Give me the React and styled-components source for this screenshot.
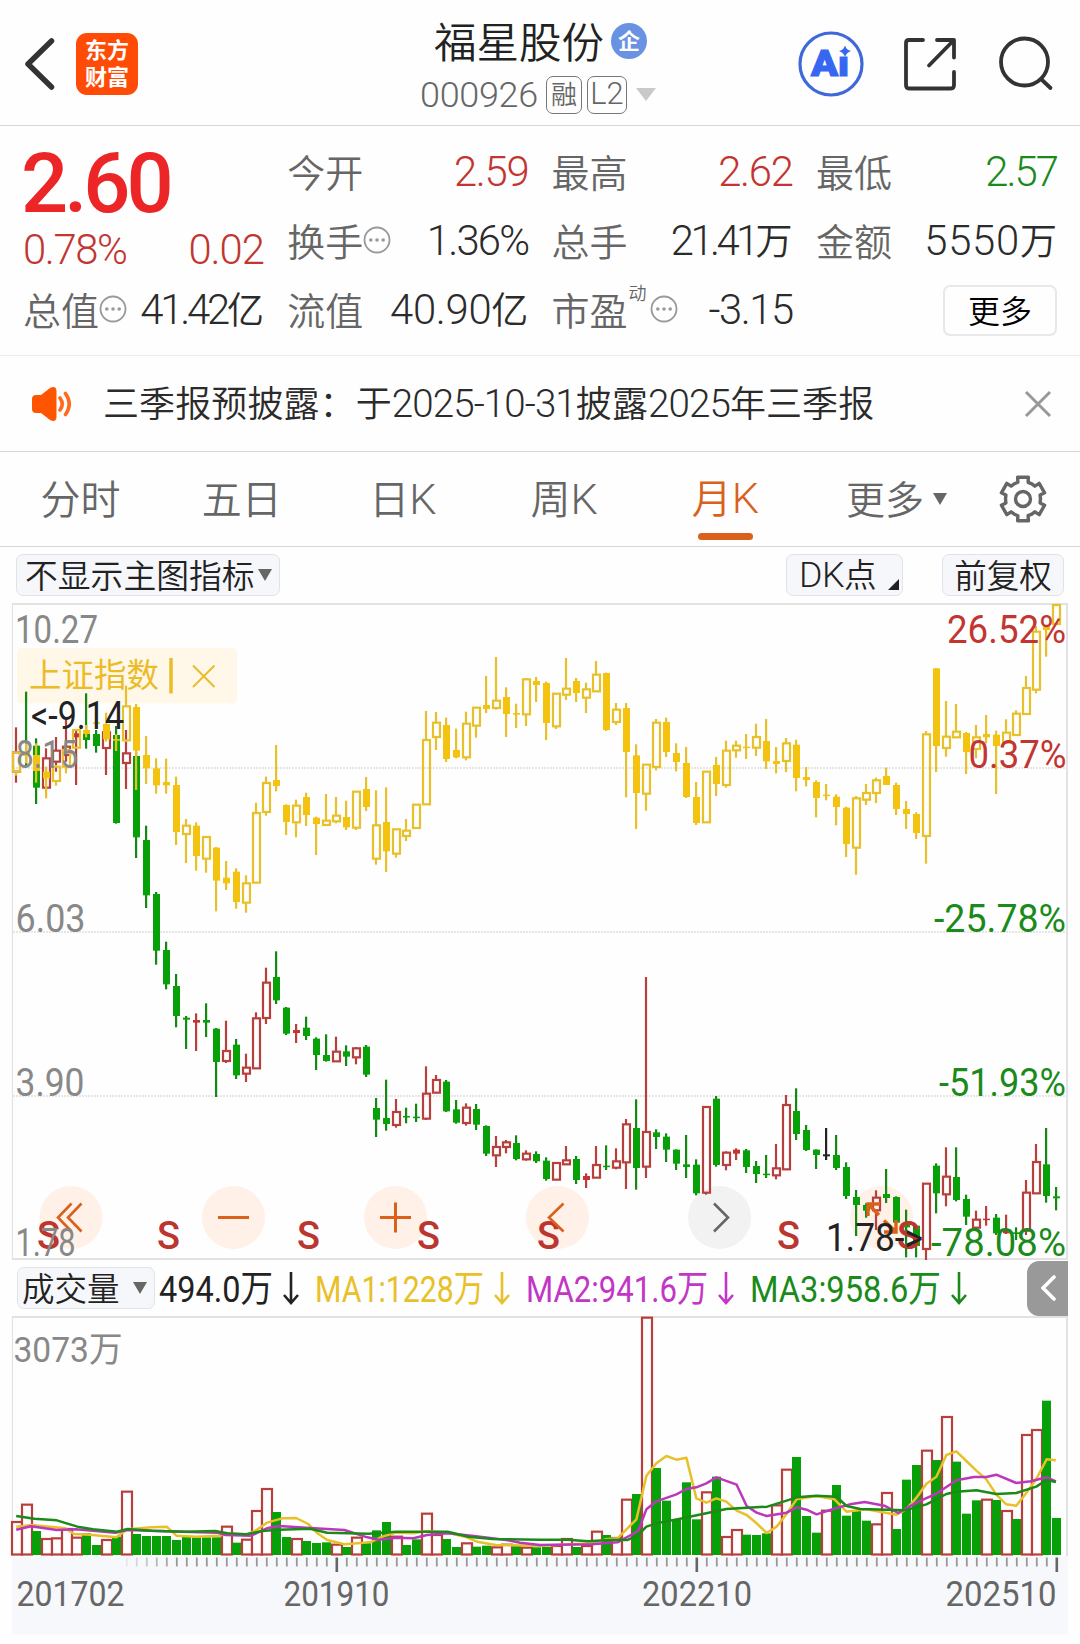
import React from 'react';
import styled, { createGlobalStyle } from 'styled-components';

const RED = '#c23531';
const GREEN = '#08a008';
const DEEP_GREEN = '#1a8a1a';
const GOLD = '#f3c310';
const GOLD_LINE = '#e8c02a';
const ORANGE = '#d9611c';

const Global = createGlobalStyle`
  * { box-sizing: border-box; }
  body {
    margin: 0;
    background: #fefefe;
    font-family: Roboto, 'Noto Sans CJK SC', sans-serif;
    color: #2b2b2b;
  }
  svg { display: block; }
`;

const Page = styled.main`
  width: 1080px;
  height: 1644px;
  display: flex;
  flex-direction: column;
  overflow: hidden;
  & > * { flex-shrink: 0; }
`;

/* ---------- mixed Chinese / Latin text ---------- */

const Run = styled.span`
  font-size: ${(p) => p.$size}px;
  font-weight: ${(p) => p.$weight || 'inherit'};
  color: ${(p) => p.$color || 'inherit'};
  line-height: 1.2;
  white-space: nowrap;
`;

const Latin = styled.span`
  font-family: Roboto, sans-serif;
  font-size: ${(p) => p.$scale}em;
  letter-spacing: ${(p) => p.$track}px;
  font-weight: ${(p) => p.$weight};
`;

const Han = styled.span`
  font-family: 'Noto Sans CJK SC', sans-serif;
  font-weight: ${(p) => p.$weight};
  letter-spacing: ${(p) => p.$track}px;
`;

function Mixed({ text, size, scale = 1.1, track = 0, hanTrack = 0, color, weight = 350, hanWeight = 350 }) {
  const runs = text.match(/[ -~]+|[^ -~]+/g) || [];
  return (
    <Run $size={size} $color={color}>
      {runs.map((r, i) =>
        /[ -~]/.test(r[0]) ? (
          <Latin key={i} $scale={scale} $track={track} $weight={weight}>{r}</Latin>
        ) : (
          <Han key={i} $weight={hanWeight} $track={hanTrack}>{r}</Han>
        )
      )}
    </Run>
  );
}

/* ---------- header ---------- */

const Header = styled.header`
  height: 126px;
  display: grid;
  grid-template-columns: 420px 1fr 282px;
  border-bottom: 1px solid #d6d6d6;
`;

const HeaderSide = styled.div`
  display: flex;
  align-items: center;
  padding: 3px 0 0 24px;
  gap: 21px;
`;

const Logo = styled.div`
  width: 62px;
  height: 62px;
  border-radius: 11px;
  background: #ff4b05;
  color: #fff;
  display: flex;
  flex-direction: column;
  align-items: center;
  justify-content: center;
  padding-bottom: 5px;
  font: 700 22px/27px 'Noto Sans CJK SC', sans-serif;
`;

const Heading = styled.div`
  display: flex;
  flex-direction: column;
  padding-top: 15px;
`;

const TitleLine = styled.div`
  display: flex;
  align-items: center;
  height: 52px;
  padding-left: 14px;
  gap: 7px;
`;

const CodeLine = styled.div`
  display: flex;
  align-items: center;
  height: 55px;
  gap: 5px;
`;

const CodeText = styled.div`
  width: 121px;
  padding-top: 3px;
`;

const Tag = styled.div`
  width: ${(p) => p.$w}px;
  height: 38px;
  border: 1.5px solid #777;
  border-radius: 7px;
  display: flex;
  align-items: center;
  justify-content: center;
`;

const Actions = styled.div`
  display: flex;
  align-items: center;
  padding-top: 3px;
`;

const DownMark = styled.i`
  flex: none;
  width: 0;
  height: 0;
  border-left: ${(p) => p.$w / 2}px solid transparent;
  border-right: ${(p) => p.$w / 2}px solid transparent;
  border-top: ${(p) => p.$h}px solid ${(p) => p.$color};
  margin-left: ${(p) => p.$ml || 0}px;
`;

function TopBar() {
  return (
    <Header>
      <HeaderSide>
        <svg width="31" height="54" viewBox="0 0 31 54">
          <path d="M27.500 4 L4 27 L27.500 50" fill="none" stroke="#333" strokeWidth="5.500" strokeLinecap="round" strokeLinejoin="round" />
        </svg>
        <Logo>
          <span>东方</span>
          <span>财富</span>
        </Logo>
      </HeaderSide>
      <Heading>
        <TitleLine>
          <Mixed text="福星股份" size={42.5} color="#222" />
          <svg width="36" height="36" viewBox="0 0 36 36">
            <circle cx="18" cy="18" r="18" fill="#6a92e3" />
            <text x="18" y="26" textAnchor="middle" fontSize="22" fontWeight="700" fill="#fff" fontFamily="'Noto Sans CJK SC', sans-serif">企</text>
          </svg>
        </TitleLine>
        <CodeLine>
          <CodeText>
            <Mixed text="000926" size={32.7} track={-0.3} color="#666" />
          </CodeText>
          <Tag $w={36}><Mixed text="融" size={26} color="#666" /></Tag>
          <Tag $w={40}><Mixed text="L2" size={28} color="#666" /></Tag>
          <DownMark $w={20} $h={13} $color="#c9c9c9" $ml={4} />
        </CodeLine>
      </Heading>
      <Actions>
        <svg width="282" height="70" viewBox="798 29 282 70">
          <circle cx="831" cy="64" r="31" fill="none" stroke="#3f68da" strokeWidth="3.200" />
          <text x="811" y="75.500" fontSize="37" fontWeight="900" fill="#3767f2" stroke="#3767f2" strokeWidth="1.200" textLength="38" lengthAdjust="spacingAndGlyphs" fontFamily="Roboto, sans-serif">Ai</text>
          <rect x="838" y="44" width="13" height="12.500" fill="#fefefe" />
          <path d="M845 45.500 Q846.500 50 851 51 Q846.500 52.500 845 57 Q843.500 52.500 839 51 Q843.500 50 845 45.500Z" fill="#3767f2" />
          <g fill="none" stroke="#333" strokeWidth="3.800" strokeLinecap="round" strokeLinejoin="round">
            <path d="M923 40 H909 Q906 40 906 43 V85 Q906 88.500 909 88.500 H951 Q954 88.500 954 85 V72" />
            <path d="M937 40 H954 V57.500 M953 41 L929 65.500" />
            <circle cx="1024.500" cy="62" r="23.500" />
            <path d="M1041 79 L1050.500 88" />
          </g>
        </svg>
      </Actions>
    </Header>
  );
}

/* ---------- quote panel ---------- */

const Quote = styled.section`
  height: 230px;
  padding: 12px 0 0 23px;
  display: grid;
  grid-template-columns: repeat(4, 241px);
  grid-template-rows: repeat(3, 69px);
  column-gap: 23.3px;
  border-bottom: 1px solid #ececec;
`;

const Cell = styled.div`
  display: flex;
  align-items: center;
  justify-content: space-between;
`;

const LabelBox = styled.div`
  display: flex;
  align-items: center;
`;

const Sup = styled.span`
  font: 350 18px/18px 'Noto Sans CJK SC', sans-serif;
  color: #666;
  align-self: flex-start;
  width: 20px;
  margin: -3px 1px 0 1px;
`;

const PriceBlock = styled.div`
  grid-row: span 2;
  display: flex;
  flex-direction: column;
`;

const Price = styled.div`
  font: 500 83px/83px Roboto, sans-serif;
  letter-spacing: -4px;
  color: #ec2626;
  margin: 4px 0 0 -2px;
`;

const Change = styled.div`
  display: flex;
  justify-content: space-between;
  height: 60px;
  align-items: center;
`;

const MoreButton = styled.button`
  margin-left: auto;
  width: 114px;
  height: 51px;
  padding: 0;
  border: 2px solid #e8e8e8;
  border-radius: 7px;
  background: #fefefe;
`;

function Info() {
  return (
    <svg width="28" height="32" viewBox="0 0 28 32">
      <circle cx="14" cy="14" r="12.500" fill="none" stroke="#999" strokeWidth="1.800" />
      <g fill="#999"><circle cx="7.800" cy="14" r="1.800" /><circle cx="14" cy="14" r="1.800" /><circle cx="20.200" cy="14" r="1.800" /></g>
    </svg>
  );
}

function Field({ label, value, color = '#2b2b2b', info, sup, track = -1.3 }) {
  return (
    <Cell>
      <LabelBox>
        <Mixed text={label} size={38} color="#666" />
        {sup && <Sup>{sup}</Sup>}
        {info && <Info />}
      </LabelBox>
      <Mixed text={value} size={37} scale={1.13} track={track} color={color} />
    </Cell>
  );
}

function QuotePanel() {
  return (
    <Quote>
      <PriceBlock>
        <Price>2.60</Price>
        <Change>
          <Mixed text="0.78%" size={37} scale={1.13} track={-1.4} color={RED} />
          <Mixed text="0.02" size={37} scale={1.13} track={-1} color={RED} />
        </Change>
      </PriceBlock>
      <Field label="今开" value="2.59" color={RED} />
      <Field label="最高" value="2.62" color={RED} />
      <Field label="最低" value="2.57" color={DEEP_GREEN} track={-2} />
      <Field label="换手" value="1.36%" info track={-1.8} />
      <Field label="总手" value="21.41万" track={-3.6} />
      <Field label="金额" value="5550万" track={0.7} />
      <Field label="总值" value="41.42亿" info track={-3.2} />
      <Field label="流值" value="40.90亿" track={-0.3} />
      <Field label="市盈" value="-3.15" sup="动" info track={-1.5} />
      <Cell>
        <MoreButton><Mixed text="更多" size={32} /></MoreButton>
      </Cell>
    </Quote>
  );
}

/* ---------- notice ---------- */

const Notice = styled.section`
  height: 96px;
  display: flex;
  align-items: center;
  padding: 0 28px 0 31px;
  border-bottom: 1px solid #d6d6d6;
`;

const NoticeText = styled.div`
  flex: 1;
  padding-left: 30px;
`;

function NoticeBar() {
  return (
    <Notice>
      <svg width="42" height="36" viewBox="0 0 42 36">
        <path d="M5 9 H10 L19 2 Q25 -1 25.500 5 V31 Q25 37 19 34 L10 27 H5 Q1 27 1 23 V13 Q1 9 5 9Z" fill="#ff5500" />
        <path d="M29 12 Q33.500 18 29 24 M34.500 7.500 Q42 18 34.500 28.500" fill="none" stroke="#ff6a20" strokeWidth="3.600" strokeLinecap="round" />
      </svg>
      <NoticeText>
        <Mixed text="三季报预披露：于2025-10-31披露2025年三季报" size={36} scale={1.07} track={-0.9} hanTrack={0.1} />
      </NoticeText>
      <svg width="28" height="28" viewBox="0 0 28 28">
        <path d="M2 2 L26 26 M26 2 L2 26" stroke="#999" strokeWidth="3" />
      </svg>
    </Notice>
  );
}

/* ---------- period tabs ---------- */

const Tabs = styled.nav`
  height: 95px;
  display: grid;
  grid-template-columns: repeat(6, 161.2px) 1fr;
  border-bottom: 1px solid #d6d6d6;
`;

const Tab = styled.div`
  display: flex;
  align-items: center;
  justify-content: center;
  padding-left: ${(p) => p.$shift || 0}px;
  height: 94px;
  color: ${(p) => (p.$active ? ORANGE : '#666')};
  ${(p) => p.$active && `
    flex-direction: column;
    padding-top: 20px;
    justify-content: flex-start;
    &::after {
      content: '';
      width: 55px;
      height: 7px;
      border-radius: 4px;
      background: ${ORANGE};
      margin-top: 8px;
    }
  `}
`;

const GearBox = styled.div`
  display: flex;
  align-items: center;
  justify-content: center;
  padding-right: 2px;
`;

function gearPath() {
  const pts = [];
  for (let k = 0; k < 6; k += 1) {
    const base = -90 + k * 60;
    [[-30, 17.5], [-17, 17.5], [-14, 22.5], [14, 22.5], [17, 17.5]].forEach(([a, r]) => {
      const t = ((base + a) * Math.PI) / 180;
      pts.push(`${(25 + r * Math.cos(t)).toFixed(1)},${(25 + r * Math.sin(t)).toFixed(1)}`);
    });
  }
  return pts.join(' ');
}

function PeriodTabs() {
  return (
    <Tabs>
      {['分时', '五日', '日K', '周K'].map((t) => (
        <Tab key={t}><Mixed text={t} size={40} scale={1.08} /></Tab>
      ))}
      <Tab $active><Mixed text="月K" size={40} scale={1.08} /></Tab>
      <Tab $shift={20}>
        <Mixed text="更多" size={39} />
        <DownMark $w={14} $h={12} $color="#666" $ml={9} />
      </Tab>
      <GearBox>
        <svg width="50" height="50" viewBox="0 0 50 50">
          <polygon points={gearPath()} fill="none" stroke="#666" strokeWidth="3.400" strokeLinejoin="round" />
          <circle cx="25" cy="25" r="7.500" fill="none" stroke="#666" strokeWidth="3.400" />
        </svg>
      </GearBox>
    </Tabs>
  );
}

/* ---------- chart toolbar ---------- */

const Tools = styled.div`
  height: 56px;
  display: flex;
  align-items: flex-start;
  padding: 7px 16px 0;
`;

const Chip = styled.button`
  width: ${(p) => p.$w}px;
  height: 42px;
  padding: 0 0 0 ${(p) => p.$pl || 0}px;
  margin-left: ${(p) => p.$ml || 0};
  display: flex;
  align-items: center;
  justify-content: ${(p) => (p.$pl ? 'flex-start' : 'center')};
  background: #f6f7fa;
  border: 1.5px solid #e0e3e8;
  border-radius: 7px;
  color: #222;
`;

const CornerMark = styled.i`
  width: 0;
  height: 0;
  margin: 18px 0 0 11px;
  border-left: 11px solid transparent;
  border-bottom: 11px solid #222;
`;

/* ---------- price chart ---------- */

const ChartBox = styled.section`
  height: 657px;
`;

// Monthly candles: [high, body top, body bottom, low, hollow?], in thirds of a pixel.
const indexCandles = [
  [457, 457, 515, 527, 1], [430, 456, 468, 490, 0], [430, 465, 513, 548, 0], [500, 515, 535, 595, 0],
  [495, 500, 543, 557, 1], [440, 450, 500, 520, 1], [388, 390, 443, 445, 1], [375, 390, 402, 412, 0],
  [355, 367, 371, 385, 0], [338, 372, 418, 425, 0], [403, 417, 422, 453, 0], [257, 319, 421, 425, 1],
  [312, 321, 452, 570, 0], [408, 465, 505, 552, 0], [475, 505, 556, 581, 0], [476, 546, 556, 581, 0],
  [530, 555, 696, 735, 0], [657, 677, 702, 789, 1], [667, 677, 768, 812, 0], [709, 711, 776, 818, 1],
  [741, 743, 842, 934, 0], [783, 833, 850, 870, 0], [805, 815, 906, 926, 0], [826, 850, 908, 938, 1],
  [608, 639, 848, 850, 1], [530, 549, 636, 647, 1], [435, 540, 558, 574, 0], [613, 615, 666, 705, 0],
  [599, 617, 667, 712, 1], [578, 591, 645, 678, 0], [650, 653, 672, 765, 0], [582, 662, 675, 678, 1],
  [591, 647, 664, 670, 1], [602, 651, 682, 690, 0], [573, 575, 683, 690, 1], [531, 567, 621, 633, 0],
  [571, 676, 776, 794, 1], [562, 666, 754, 816, 0], [686, 688, 761, 773, 1], [657, 692, 708, 723, 1],
  [612, 614, 684, 686, 1], [333, 420, 613, 615, 1], [336, 368, 411, 450, 1], [353, 375, 477, 486, 0],
  [386, 450, 472, 475, 0], [335, 371, 472, 481, 1], [321, 323, 377, 413, 1], [228, 315, 327, 339, 0],
  [171, 302, 324, 329, 1], [262, 291, 342, 411, 0], [311, 339, 344, 384, 0], [234, 238, 343, 378, 1],
  [231, 243, 255, 306, 0], [245, 249, 369, 420, 0], [279, 281, 379, 387, 1], [174, 266, 284, 300, 1],
  [234, 243, 279, 306, 0], [248, 268, 293, 339, 1], [183, 224, 274, 276, 1], [218, 219, 390, 393, 0],
  [309, 329, 366, 375, 1], [309, 324, 456, 592, 0], [433, 466, 579, 687, 0], [492, 494, 581, 632, 1],
  [357, 368, 501, 511, 1], [353, 366, 456, 471, 0], [430, 459, 486, 514, 0], [441, 489, 591, 594, 0],
  [546, 591, 669, 675, 0], [512, 515, 667, 669, 1], [471, 495, 552, 588, 0], [422, 452, 555, 563, 1],
  [422, 437, 451, 473, 1], [402, 440, 444, 477, 0], [371, 411, 443, 468, 1], [357, 423, 484, 507, 0],
  [441, 483, 492, 520, 0], [414, 430, 483, 516, 1], [419, 434, 534, 574, 0], [501, 531, 540, 559, 0],
  [541, 546, 594, 652, 0], [552, 584, 588, 601, 0], [583, 590, 621, 676, 0], [620, 623, 732, 771, 0],
  [588, 595, 743, 824, 1], [552, 579, 599, 615, 1], [533, 541, 579, 609, 1], [503, 528, 555, 555, 0],
  [548, 555, 627, 645, 0], [603, 627, 642, 687, 0], [637, 642, 699, 717, 0], [393, 403, 708, 791, 1],
  [204, 205, 438, 516, 0], [303, 410, 444, 470, 1], [312, 395, 412, 414, 1], [396, 399, 456, 522, 0],
  [375, 412, 447, 475, 1], [345, 402, 412, 430, 0], [392, 404, 438, 582, 0], [358, 398, 428, 430, 1],
  [331, 341, 405, 407, 1], [228, 264, 342, 344, 1], [78, 95, 269, 280, 1], [75, 80, 90, 170, 0],
  [12, 15, 72, 75, 1],
];

// Stock candles: g = fall, h = rise (hollow), r = rise (thin body), k = unchanged.
const openingCandles = [
  [382, 457, 515, 548, 'h'], [275, 455, 465, 498, 'g'], [415, 437, 563, 612, 'g'], [445, 475, 563, 568, 'h'],
  [411, 452, 485, 515, 'h'], [358, 440, 465, 485, 'h'], [390, 400, 412, 555, 'r'], [280, 398, 420, 446, 'g'],
  [390, 402, 438, 458, 'g'], [375, 397, 444, 525, 'h'], [378, 405, 669, 671, 'g'], [390, 460, 489, 567, 'h'],
  [455, 468, 712, 774, 'g'], [677, 720, 886, 924, 'g'], [876, 882, 1052, 1094, 'g'],
];
const laterCandles = [
  [5, 30, 133, 148, 'g'], [102, 138, 228, 262, 'g'], [228, 233, 239, 327, 'g'], [220, 240, 248, 333, 'r'],
  [190, 240, 248, 291, 'g'], [264, 266, 366, 471, 'g'], [242, 333, 363, 369, 'h'], [297, 314, 406, 417, 'g'],
  [341, 383, 401, 426, 'h'], [217, 235, 385, 387, 'h'], [83, 128, 234, 252, 'h'], [34, 111, 181, 192, 'g'],
  [201, 203, 281, 285, 'g'], [252, 270, 279, 309, 'r'], [230, 263, 288, 300, 'g'], [292, 296, 345, 390, 'g'],
  [283, 345, 363, 365, 'g'], [290, 335, 364, 366, 'h'], [316, 334, 350, 378, 'g'], [321, 325, 352, 373, 'h'],
  [315, 320, 404, 411, 'g'], [474, 504, 539, 591, 'g'], [419, 534, 552, 572, 'g'], [477, 516, 555, 563, 'h'],
  [503, 528, 531, 550, 'g'], [491, 530, 533, 546, 'g'], [379, 461, 536, 540, 'h'], [405, 420, 458, 461, 'h'],
  [420, 425, 514, 516, 'g'], [480, 508, 548, 551, 'g'], [490, 503, 549, 557, 'h'], [492, 507, 554, 570, 'g'],
  [556, 558, 641, 648, 'g'], [588, 621, 646, 681, 'h'], [600, 607, 621, 640, 'h'], [586, 609, 657, 661, 'g'],
  [631, 641, 658, 662, 'h'], [634, 642, 664, 669, 'g'], [652, 662, 717, 722, 'g'], [667, 669, 719, 721, 'h'],
  [618, 661, 673, 675, 'h'], [648, 657, 720, 732, 'g'], [700, 708, 720, 744, 'r'], [618, 675, 713, 715, 'h'],
  [616, 677, 681, 690, 'g'], [625, 664, 683, 688, 'h'], [537, 553, 667, 747, 'h'], [478, 564, 684, 749, 'g'],
  [111, 576, 680, 714, 'h'], [568, 577, 591, 627, 'g'], [580, 590, 629, 666, 'g'], [628, 629, 671, 690, 'g'],
  [585, 673, 681, 714, 'g'], [658, 674, 760, 766, 'g'], [499, 501, 758, 764, 'h'], [468, 476, 675, 680, 'g'],
  [634, 638, 675, 691, 'h'], [625, 629, 641, 660, 'r'], [627, 631, 681, 699, 'g'], [663, 678, 702, 729, 'g'],
  [645, 701, 705, 714, 'g'], [612, 685, 706, 718, 'h'], [465, 495, 688, 690, 'h'], [445, 513, 582, 600, 'g'],
  [555, 570, 630, 633, 'g'], [628, 629, 645, 687, 'g'], [564, 643, 649, 660, 'k'], [585, 645, 684, 690, 'g'],
  [667, 681, 768, 777, 'g'], [750, 771, 795, 888, 'g'], [790, 795, 812, 833, 'g'], [751, 773, 811, 870, 'h'],
  [687, 762, 774, 789, 'g'], [769, 771, 848, 850, 'g'], [809, 848, 862, 952, 'g'], [855, 857, 918, 952, 'g'],
  [729, 731, 927, 960, 'h'], [670, 677, 760, 820, 'g'], [622, 710, 763, 799, 'h'], [622, 711, 780, 784, 'g'],
  [764, 777, 830, 855, 'g'], [812, 839, 863, 867, 'h'], [798, 836, 840, 857, 'r'], [822, 833, 880, 885, 'g'],
  [824, 868, 880, 882, 'r'], [862, 877, 882, 900, 'g'], [720, 758, 872, 885, 'h'], [612, 666, 760, 762, 'h'],
  [564, 673, 768, 788, 'g'], [741, 769, 775, 811, 'g'],
];
const stockCandles = [
  ...openingCandles,
  ...laterCandles.map(([a, b, c, d, k]) => [a + 1020, b + 1020, c + 1020, d + 1020, k]),
];

function Candle({ i, data, body, wick, hollow }) {
  const cx = 16 + i * 10;
  const [hi, top, bot, lo] = data.slice(0, 4).map((v) => 600 + v / 3);
  if (hollow) {
    return (
      <g stroke={wick} strokeWidth="2.200" fill="none">
        {top - hi > 1 && <path d={`M${cx} ${hi} V${top}`} />}
        {lo - bot > 1 && <path d={`M${cx} ${bot} V${lo}`} />}
        <rect x={cx - 3} y={top} width="7" height={Math.max(bot - top, 1)} />
      </g>
    );
  }
  return (
    <g>
      <rect x={cx - 1} y={hi} width="2.200" height={lo - hi} fill={wick} />
      <rect x={cx - 3} y={top} width="7" height={Math.max(bot - top, 1.5)} fill={body} />
    </g>
  );
}

const kindColor = {
  g: [GREEN, '#128a12'],
  h: [RED, '#b8403c'],
  r: [RED, '#b8403c'],
  k: ['#222', '#222'],
};

// [text, x, baseline, width, color]
const priceLabels = [
  ['10.27', 15, 643, 83, '#888'],
  ['8.15', 16, 767.5, 62, '#888'],
  ['6.03', 15.500, 932, 70, '#888'],
  ['3.90', 15.500, 1096, 69, '#888'],
  ['1.78', 15.500, 1256, 60, '#888'],
  ['26.52%', 947, 643, 119, RED],
  ['0.37%', 968.5, 767.5, 98, RED],
  ['-25.78%', 934, 932, 132, DEEP_GREEN],
  ['-51.93%', 939, 1096, 127, DEEP_GREEN],
  ['-78.08%', 931, 1256, 135, DEEP_GREEN],
  ['<-9.14', 31, 729, 93, '#222'],
  ['1.78->', 826, 1250.500, 97, '#222'],
];

const buttonCentres = [71, 233.5, 395.5, 557.5, 719.5, 881.5];
const splitMarks = [48.5, 168.5, 308.5, 428.5, 548.5, 788.5, 908.5];

function Label({ text, x, y, width, color, size = 38 }) {
  return (
    <text x={x} y={y} fontSize={size} fill={color} textLength={width} lengthAdjust="spacingAndGlyphs" fontFamily="Roboto, 'Noto Sans CJK SC', sans-serif">
      {text}
    </text>
  );
}

function PriceChart() {
  return (
    <ChartBox>
      <svg width="1080" height="657" viewBox="0 603 1080 657">
        {[768, 932, 1096].map((y) => (
          <path key={y} d={`M13 ${y} H1066`} stroke="#dedede" strokeWidth="1.500" strokeDasharray="2 1" />
        ))}
        <path d="M12.500 603 V1259" stroke="#e2e2e2" strokeWidth="1.200" />
        <path d="M12 604 H1067 V1259 H12" fill="none" stroke="#e2e2e2" strokeWidth="2" />
        {buttonCentres.map((x, i) => (
          <circle key={x} cx={x} cy="1217.500" r="31.500" fill={i === 4 ? '#f2f2f2' : '#fff0e8'} />
        ))}
        <rect x="17" y="648" width="220" height="55.500" rx="5" fill="#fff7e8" />
        {stockCandles.map((c, i) => (
          <Candle key={i} i={i} data={c} body={kindColor[c[4]][0]} wick={kindColor[c[4]][1]} hollow={c[4] === 'h'} />
        ))}
        {indexCandles.map((c, i) => (
          <Candle key={i} i={i} data={c} body={GOLD} wick={GOLD_LINE} hollow={c[4] === 1} />
        ))}
        <g fontFamily="Roboto, sans-serif" fontSize="38" fontWeight="500" fill="#bb3531" textAnchor="middle">
          {splitMarks.map((x) => <text key={x} x={x} y="1248.500">S</text>)}
        </g>
        <text x="29" y="687" fontSize="32.500" fill="#ebbc28" fontFamily="'Noto Sans CJK SC', sans-serif">上证指数</text>
        <g fill="none" stroke="#e8bd2c">
          <path d="M171 658 V693.500" strokeWidth="3.500" />
          <path d="M193 665.500 L214.500 687 M214.500 665.500 L193 687" strokeWidth="2" />
        </g>
        <g fill="none" stroke={ORANGE} strokeWidth="2.600">
          <path d="M71.500 1203.500 L58 1217.500 L71.500 1231.500 M81.500 1203.500 L68 1217.500 L81.500 1231.500" />
          <path d="M218 1217.500 H249" strokeWidth="3" />
          <path d="M380 1217.500 H411 M395.500 1202.500 V1232.500" strokeWidth="3" />
          <path d="M563.500 1203.500 L549 1217.500 L563.500 1231.500" />
          <path d="M714 1203.500 L728 1217.500 L714 1231.500" stroke="#666" />
          <path d="M868 1216 V1204 H880 M868 1204 L879 1215 M896 1220 V1232 H884 M884 1220.500 L896 1232" strokeWidth="3.400" />
        </g>
        {priceLabels.map(([t, x, y, w, c]) => <Label key={t + y} text={t} x={x} y={y} width={w} color={c} />)}
      </svg>
    </ChartBox>
  );
}

/* ---------- volume ---------- */

const VolumeHead = styled.div`
  height: 56px;
  display: flex;
  align-items: center;
  padding-left: 17px;
`;

const VolumeItem = styled.div`
  width: ${(p) => p.$w}px;
  display: flex;
  align-items: center;
  color: ${(p) => p.$color};
  margin-left: ${(p) => p.$ml || 0}px;
  gap: 10px;
`;

const Collapse = styled.button`
  width: 41px;
  height: 55px;
  border: 0;
  padding: 0 0 0 14px;
  margin: 0 12px 0 auto;
  border-radius: 12px 0 0 12px;
  background: #999;
`;

function Reading({ text, width, slot, color, ml }) {
  return (
    <VolumeItem $w={slot} $color={color} $ml={ml}>
      <svg width={width} height="46" viewBox={`0 0 ${width} 46`}>
        <Label text={text} x={0} y={36.5} width={width} color="currentColor" size={37} />
      </svg>
      <svg width="16" height="33" viewBox="0 0 16 33">
        <path d="M8 0 V31 M1 23 L8 31 L15 23" fill="none" stroke="currentColor" strokeWidth="2.600" />
      </svg>
    </VolumeItem>
  );
}

const VolumeBox = styled.section`
  height: 328px;
`;

// Bar tops; r = rising month (outlined), g = falling month (solid).
const volumeBars = `r636 r584 g663 r687 r685 r657 r683 g670 g705 r690 g680 r545 g672 g678 g678 g678 g690 g680 g682 g682 g682
r650 g698 r689 r603 r537 g606 g681 r687 g693 g699 g697 r704 g711 r683 g697 g661 g636 r680 g705 g688 r611 r675 g687 g711
r700 g710 g707 r712 r704 g706 r713 g712 g711 r708 r687 g711 r708 r665 g675 r684 r569 g552 r23 g474 g572 g630 g517 g628
r547 g500 r681 r660 g674 g675 g670 r586 r479 g441 g618 g668 r602 g525 g617 g600 g632 r643 r549 g657 g509 g465 r422 g450
r321 g455 g611 g571 r569 g570 r603 g627 r375 r360 g272 g624`.split(/\s+/);

const averages = [
  [GOLD_LINE, '47,650 92,645 190,655 215,672 260,674 338,682 370,658 440,652 484,650 512,677 570,680 640,677 655,670 715,675 745,660 775,638 820,625 860,624 895,642 920,668 950,690 1000,703 1075,697 1110,680 1150,668 1200,670 1240,663 1300,668 1350,680 1385,695 1440,705 1568,707 1718,700 1758,688 1793,685 1848,628 1877,497 1906,460 1935,438 1964,449 1993,443 2022,565 2051,578 2080,565 2109,575 2139,602 2168,615 2197,640 2226,669 2255,650 2284,612 2313,568 2371,558 2423,568 2458,605 2516,598 2603,614 2632,598 2661,563 2690,521 2719,500 2748,435 2777,424 2806,453 2835,482 2864,508 2893,554 2922,583 2951,587 2980,549 3009,507 3039,448 3066,451'],
  ['#bb38bb', '47,659 90,649 165,660 220,658 335,668 370,660 480,664 630,668 655,675 730,677 775,655 810,648 900,654 1000,660 1060,680 1100,689 1150,683 1200,685 1240,675 1300,670 1370,677 1470,690 1510,698 1568,705 1718,703 1793,697 1853,663 1877,598 1906,574 1964,553 1993,537 2022,532 2051,520 2080,502 2139,524 2168,588 2197,608 2226,618 2284,608 2313,592 2342,599 2371,613 2429,594 2468,583 2511,576 2568,587 2608,609 2661,578 2719,551 2777,511 2828,501 2864,501 2893,494 2951,519 2993,514 3039,502 3066,514'],
  [DEEP_GREEN, '47,618 100,626 165,631 225,650 270,658 340,665 370,657 440,662 540,665 625,663 660,670 715,673 760,663 810,659 900,656 950,668 1070,671 1150,665 1300,665 1360,680 1430,687 1568,689 1648,689 1708,694 1768,690 1823,690 1853,675 1877,650 1906,640 1968,628 2051,610 2109,597 2228,590 2284,572 2313,562 2371,557 2429,560 2458,588 2498,597 2628,601 2690,583 2748,552 2777,545 2835,541 2893,552 2951,549 3009,530 3039,510 3066,516'],
];

const axisLabels = [
  ['201702', 16.5, 108], ['201910', 283.5, 106], ['202210', 642, 110], ['202510', 945.5, 111],
];

function VolumeChart() {
  const base = 1555;
  return (
    <VolumeBox>
      <svg width="1080" height="328" viewBox="0 1316 1080 328">
        <rect x="12" y="1556.500" width="1056" height="78" fill="#f7f8fb" />
        <path d="M12.500 1317 V1556" stroke="#e2e2e2" strokeWidth="1.200" />
        <path d="M12 1317 H1067 V1556" fill="none" stroke="#e2e2e2" strokeWidth="2" />
        {volumeBars.map((b, i) => {
          const x = 16.5 + i * 10;
          const y = 1310 + Number(b.slice(1)) / 3;
          return b[0] === 'r' ? (
            <rect key={i} x={x - 4.5} y={y} width="10" height={base - y - 0.5} fill="#fefefe" stroke="#b8403c" strokeWidth="2.200" />
          ) : (
            <rect key={i} x={x - 4.5} y={y} width="9" height={base - y} fill={GREEN} />
          );
        })}
        <g transform="translate(0 1310) scale(0.34439 0.33333)" fill="none" strokeWidth="2.500" strokeLinejoin="round">
          {averages.map(([c, pts]) => (
            <polyline key={c} points={pts} stroke={c} vectorEffect="non-scaling-stroke" />
          ))}
        </g>
        {volumeBars.map((b, i) => {
          const major = i === 32 || i === 68 || i === 104;
          const fade = Math.max(0, Math.min(1, (i - 10) / 6));
          return (
            <path key={i} d={`M${16.8 + i * 10} 1557.500 V${major ? 1572 : 1566.5}`} stroke={major ? '#666' : '#999'} strokeWidth={major ? 2.6 : 1.8} opacity={fade} />
          );
        })}
        <Label text="3073万" x={13.5} y={1362} width={109} color="#888" size={35} />
        {axisLabels.map(([t, x, w]) => (
          <Label key={t} text={t} x={x} y={1606} width={w} color="#666" size={35} />
        ))}
      </svg>
    </VolumeBox>
  );
}

export default function App() {
  return (
    <Page>
      <Global />
      <TopBar />
      <QuotePanel />
      <NoticeBar />
      <PeriodTabs />
      <Tools>
        <Chip $w={264} $pl={8}>
          <Mixed text="不显示主图指标" size={32.8} />
          <DownMark $w={14} $h={12} $color="#666" $ml={3} />
        </Chip>
        <Chip $w={117} $pl={12} $ml="auto">
          <Mixed text="DK点" size={32.5} track={-0.5} />
          <CornerMark />
        </Chip>
        <Chip $w={122} $ml="39px"><Mixed text="前复权" size={32.5} /></Chip>
      </Tools>
      <PriceChart />
      <VolumeHead>
        <Chip $w={138} $pl={4}>
          <Mixed text="成交量" size={32.5} />
          <DownMark $w={14} $h={12} $color="#666" $ml={13} />
        </Chip>
        <Reading text="494.0万" width={114} slot={156} ml={4} color="#222" />
        <Reading text="MA1:1228万" width={169} slot={211} color={GOLD_LINE} />
        <Reading text="MA2:941.6万" width={182} slot={224} color="#c236c6" />
        <Reading text="MA3:958.6万" width={191} slot={230} color={DEEP_GREEN} />
        <Collapse>
          <svg width="16" height="26" viewBox="0 0 16 26">
            <path d="M13 2 L2 13 L13 24" fill="none" stroke="#fff" strokeWidth="3.600" strokeLinecap="round" />
          </svg>
        </Collapse>
      </VolumeHead>
      <VolumeChart />
    </Page>
  );
}
